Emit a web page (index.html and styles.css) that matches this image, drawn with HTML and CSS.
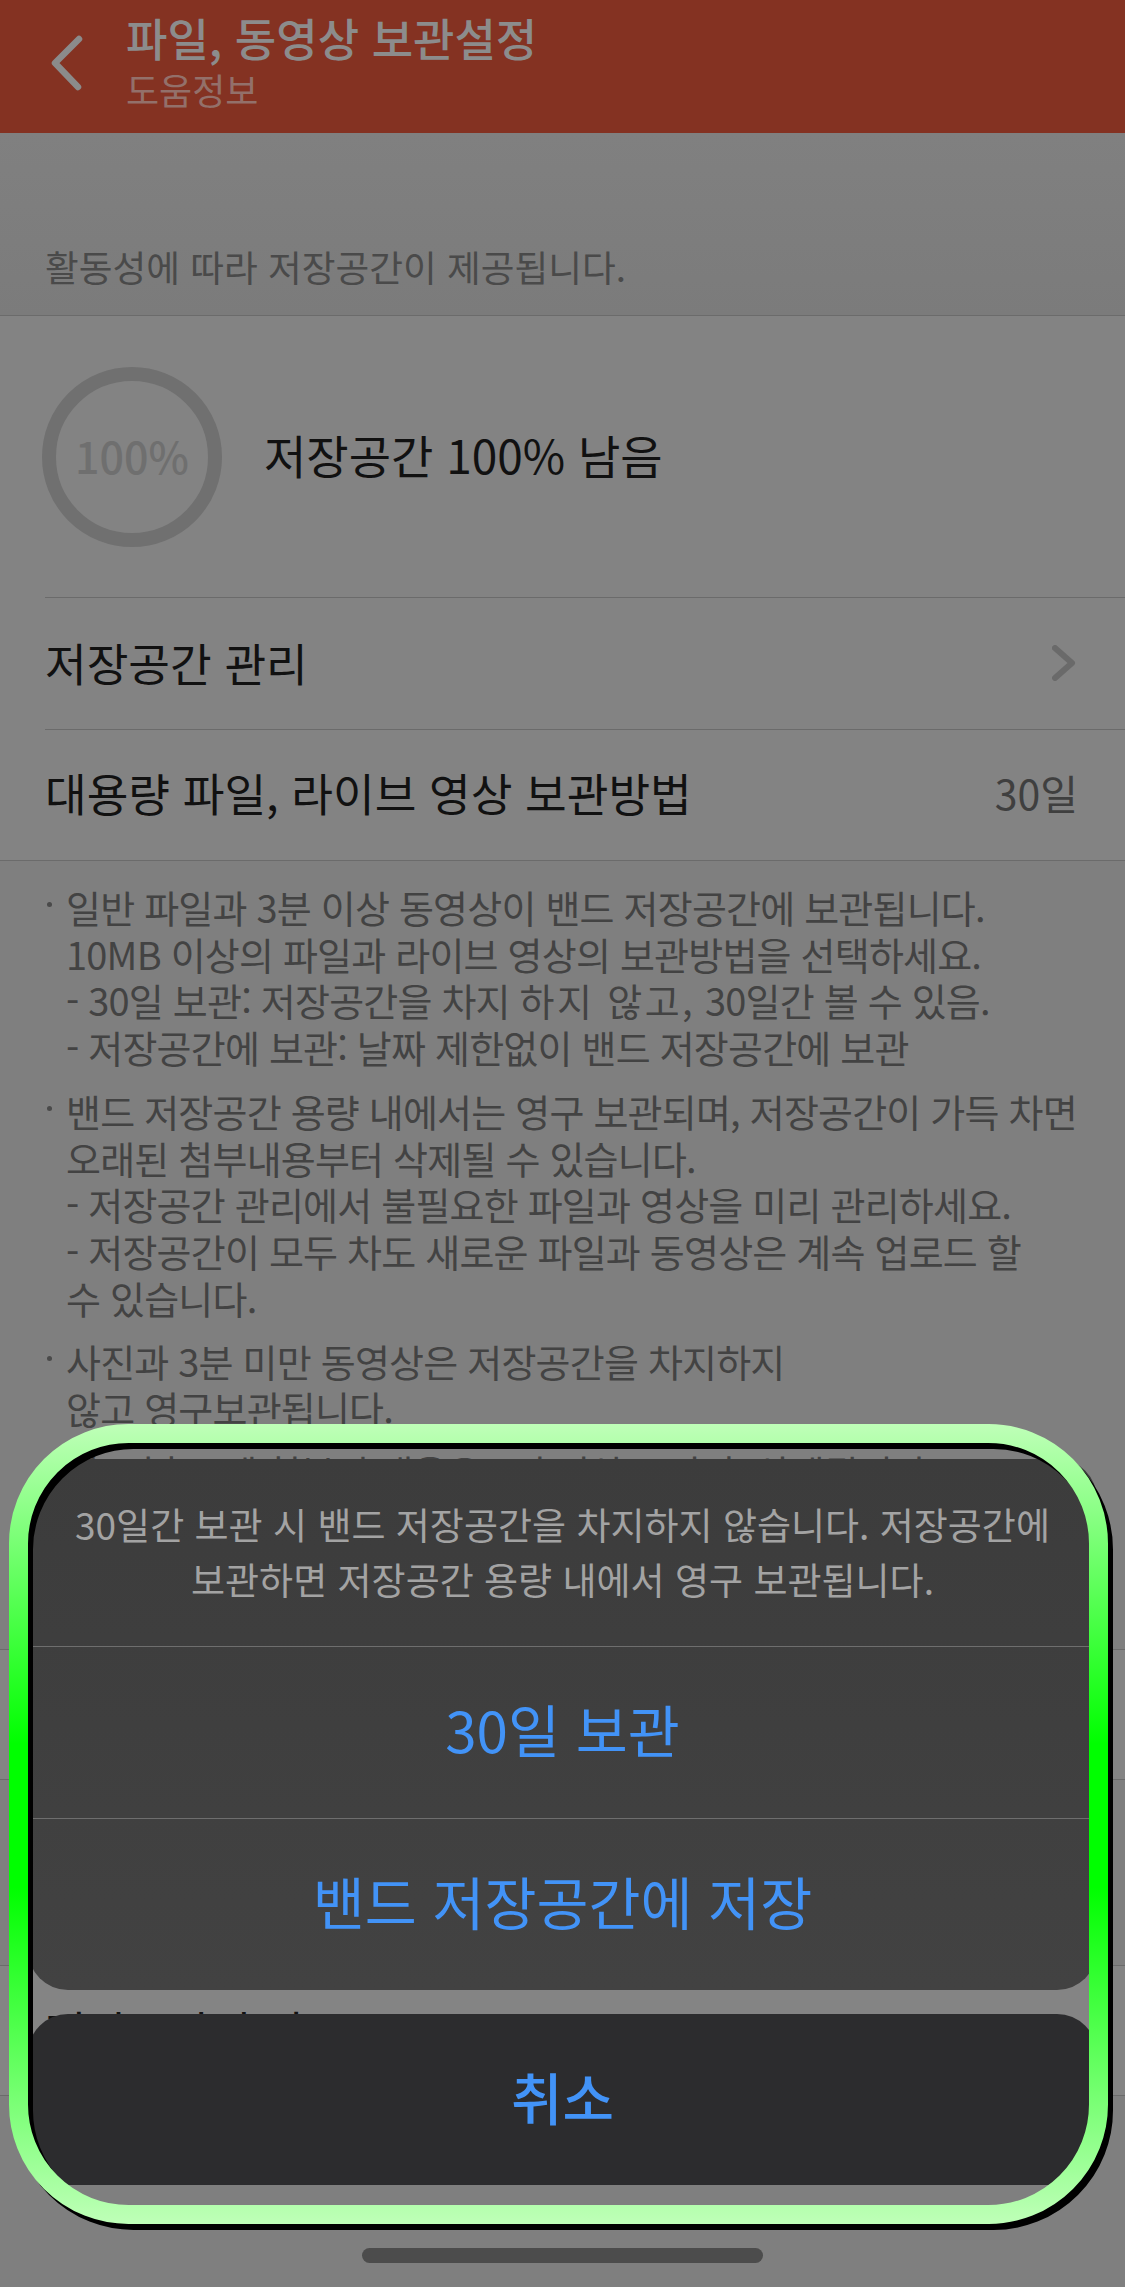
FILE: index.html
```html
<!DOCTYPE html>
<html lang="ko">
<head>
<meta charset="utf-8">
<title>파일, 동영상 보관설정</title>
<link rel="stylesheet" href="styles.css">
</head>
<body>
<div class="page">
  <header class="appbar">
    <svg class="back" viewBox="0 0 40 60" aria-hidden="true"><polyline points="29,5 5,29 28,53"/></svg>
    <div class="appbar-text">
      <div class="title">파일, 동영상 보관설정</div>
      <div class="subtitle">도움정보</div>
    </div>
  </header>

  <section class="intro">활동성에 따라 저장공간이 제공됩니다.</section>

  <section class="usage">
    <div class="gauge">100%</div>
    <div class="usage-label">저장공간 100% 남음</div>
  </section>

  <div class="row row-inset">
    <span>저장공간 관리</span>
    <svg class="chev" viewBox="0 0 24 36" aria-hidden="true"><polyline points="3,3 20,18 3,33"/></svg>
  </div>
  <div class="row row-inset row-last">
    <span>대용량 파일, 라이브 영상 보관방법</span>
    <span class="value">30일</span>
  </div>

  <section class="notes">
    <p class="note">일반 파일과 3분 이상 동영상이 밴드 저장공간에 보관됩니다.<br>10MB 이상의 파일과 라이브 영상의 보관방법을 선택하세요.<br>- 30일 보관: 저장공간을 차지 <span class="loose">하지 않고,</span> 30일간 볼 수 있음.<br>- 저장공간에 보관: 날짜 제한없이 밴드 저장공간에 보관</p>
    <p class="note">밴드 저장공간 용량 내에서는 영구 보관되며, 저장공간이 가득 차면<br>오래된 첨부내용부터 삭제될 수 있습니다.<br>- 저장공간 관리에서 불필요한 파일과 영상을 미리 관리하세요.<br>- 저장공간이 모두 차도 새로운 파일과 동영상은 계속 업로드 할<br>수 있습니다.</p>
    <p class="note">사진과 3분 미만 동영상은 저장공간을 차지하지<br>않고 영구보관됩니다.</p>
    <p class="note">단, 이후로에 첨부된 내용은 1년 이상 보관 후 삭제됩니다.</p>
  </section>

  <div class="plain-row"></div>
  <div class="plain-gap"></div>
  <div class="plain-row plain-text">저장공간 추가</div>

  <div class="action-sheet">
    <div class="sheet-group">
      <div class="sheet-msg">30일간 보관 시 밴드 저장공간을 차지하지 않습니다. 저장공간에<br>보관하면 저장공간 용량 내에서 영구 보관됩니다.</div>
      <div class="sheet-btn">30일 보관</div>
      <div class="sheet-btn">밴드 저장공간에 저장</div>
    </div>
    <div class="sheet-cancel">취소</div>
  </div>

  <svg class="highlight" viewBox="0 0 1125 2287" aria-hidden="true">
    <defs>
      <linearGradient id="ringGrad" gradientUnits="userSpaceOnUse" x1="0" y1="1424" x2="0" y2="2224">
        <stop offset="0" stop-color="#bfffb8"/>
        <stop offset="0.4" stop-color="#00ff00"/>
        <stop offset="0.58" stop-color="#00ff00"/>
        <stop offset="1" stop-color="#bfffb8"/>
      </linearGradient>
    </defs>
    <rect class="ring-shadow" x="23.5" y="1439.5" width="1080" height="781" rx="110"/>
    <rect class="ring" x="18.5" y="1433.5" width="1080" height="781" rx="110" stroke="url(#ringGrad)"/>
  </svg>

  <div class="home-bar"></div>
</div>
</body>
</html>
```

FILE: styles.css
```css
* { box-sizing: border-box; }
html, body { margin: 0; padding: 0; }
body {
  width: 1125px;
  height: 2287px;
  overflow: hidden;
  background: #7f7f7f;
  font-family: "Noto Sans CJK KR", "Noto Sans", sans-serif;
  color: #111;
}
.page { position: relative; width: 1125px; height: 2287px; overflow: hidden; }

.appbar {
  height: 133px;
  background: #843222;
  display: flex;
  align-items: flex-start;
  padding-left: 50px;
}
.back { width: 40px; height: 60px; margin-top: 34px; margin-right: 36px; flex: none; }
.back polyline { fill: none; stroke: #8b8b8b; stroke-width: 6.5; stroke-linecap: round; stroke-linejoin: round; }
.title { font-size: 45px; line-height: 52px; margin-top: 12px; font-weight: 500; color: #8c8c8c; white-space: nowrap; }
.subtitle { font-size: 36px; line-height: 42px; margin-top: 4px; color: #93706a; white-space: nowrap; }

.intro {
  height: 183px;
  padding: 109px 45px 0;
  font-size: 36.7px;
  line-height: 48px;
  color: #4a4a4a;
  background: linear-gradient(#808080, #7b7b7b);
  border-bottom: 1px solid #6b6b6b;
}

.usage {
  height: 281px;
  display: flex;
  align-items: center;
  gap: 42px;
  padding-left: 42px;
  background: #838383;
}
.gauge {
  width: 180px;
  height: 180px;
  border: 14px solid #707070;
  border-radius: 50%;
  display: flex;
  align-items: center;
  justify-content: center;
  padding-bottom: 4px;
  font-size: 43px;
  font-weight: 500;
  color: #6f6f6f;
}
.usage-label { font-size: 46px; padding-bottom: 6px; color: #111; white-space: nowrap; }

.row {
  height: 132px;
  background: #838383;
  padding: 0 47px 4px 45px;
  display: flex;
  align-items: center;
  justify-content: space-between;
  font-size: 45.3px;
  white-space: nowrap;
  position: relative;
}
.row-inset { border-top: 1px solid #6b6b6b; background-clip: padding-box; }
.row-inset::before { content: ""; position: absolute; left: 0; top: -1px; width: 45px; height: 1px; background: #838383; }
.row-last { height: 131px; padding-bottom: 6px; }
.value { font-size: 41px; color: #3f3f3f; }
.chev { width: 24px; height: 36px; margin-right: 2px; margin-top: 3px; }
.chev polyline { fill: none; stroke: #6a6a6a; stroke-width: 6; stroke-linecap: round; stroke-linejoin: round; }

.notes {
  height: 789px;
  border-top: 1px solid #6b6b6b;
  background: #7f7f7f;
  padding: 23px 30px 0 66px;
  font-size: 38px;
  letter-spacing: -0.8px;
  line-height: 46.7px;
  color: #434343;
  white-space: nowrap;
}
.note { margin: 0 0 17px; position: relative; }
.note::before {
  content: "";
  position: absolute;
  left: -19px;
  top: 18px;
  width: 5px;
  height: 5px;
  border-radius: 50%;
  background: #4a4a4a;
}
.loose { letter-spacing: 2.4px; }

.plain-row {
  height: 131px;
  background: #848484;
  border-top: 1px solid #6b6b6b;
  border-bottom: 1px solid #6b6b6b;
}
.plain-gap { height: 185px; background: #7f7f7f; }
.plain-text {
  height: 131px;
  display: flex;
  align-items: center;
  padding-left: 45px;
  font-size: 45px;
  color: #111;
}

.action-sheet {
  position: absolute;
  left: 28px;
  top: 1459px;
  width: 1069px;
  display: flex;
  flex-direction: column;
  gap: 24px;
  text-align: center;
}
.sheet-group { height: 531px; background: linear-gradient(#3c3c3c, #424242); border-radius: 40px; overflow: hidden; }
.sheet-msg {
  height: 187px;
  padding-top: 38px;
  font-size: 37px;
  line-height: 55px;
  color: #a3a3a3;
  white-space: nowrap;
}
.sheet-btn {
  height: 172px;
  border-top: 1px solid #6e6e6e;
  padding-bottom: 10px;
  display: flex;
  align-items: center;
  justify-content: center;
  font-size: 56.5px;
  color: #4293f7;
}
.sheet-cancel {
  height: 171px;
  padding-bottom: 9px;
  background: #2c2c2e;
  border-radius: 40px;
  display: flex;
  align-items: center;
  justify-content: center;
  font-size: 56px;
  font-weight: 500;
  color: #4293f7;
}

.highlight { position: absolute; left: 0; top: 0; width: 1125px; height: 2287px; pointer-events: none; }
.ring { fill: none; stroke-width: 19; }
.ring-shadow { fill: none; stroke: #000; stroke-width: 19; }

.home-bar {
  position: absolute;
  left: 362px;
  top: 2248px;
  width: 401px;
  height: 15px;
  border-radius: 8px;
  background: #4c4c4c;
}
```
